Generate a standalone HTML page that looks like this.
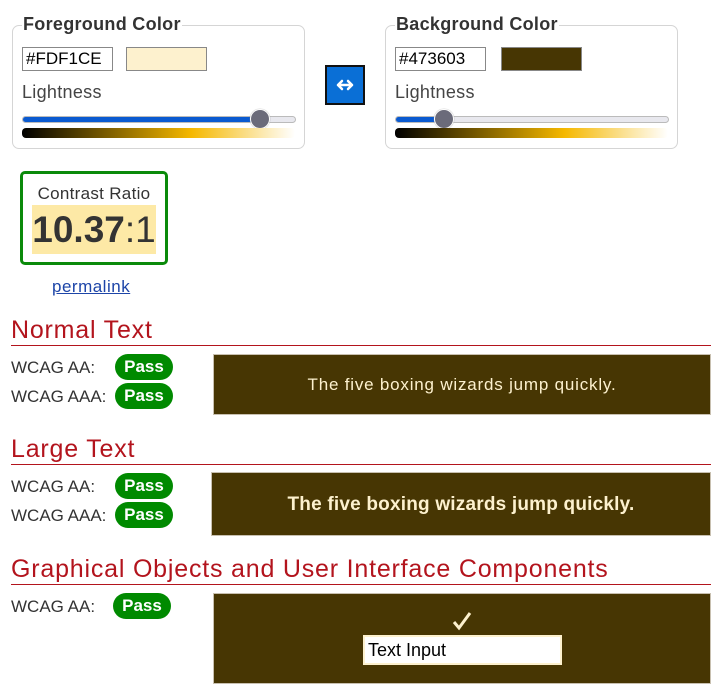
<!DOCTYPE html>
<html><head><style>
body{margin:0;width:725px;height:695px;background:#fff;font-family:"Liberation Sans",sans-serif;color:#333;position:relative;overflow:hidden}
.a{position:absolute}
.fs{position:absolute;border:1px solid #d5d5d5;border-radius:7px;width:291px;height:122px;top:25px}
.lg{position:absolute;top:-12px;left:9px;background:#fff;padding:0 1px;font-weight:bold;font-size:18px;color:#333;letter-spacing:0.3px}
.inp{position:absolute;top:21px;left:9px;border:1px solid #888;font-size:17px;line-height:21px;padding-left:3px;color:#000;box-sizing:border-box;width:91px;height:24px}
.sw{position:absolute;top:21px;left:113px;width:81px;height:24px;border:1px solid #888;box-sizing:border-box}
.lt{position:absolute;top:56px;left:9px;font-size:18px;color:#444;letter-spacing:0.3px}
.tr{position:absolute;top:90px;left:9px;width:272px;height:5px;border:1px solid #bbb;border-radius:4px;background:#e8e8ee}
.fill{position:absolute;left:0;top:0;height:5px;background:#0a5ad0;border-radius:4px}
.th{position:absolute;top:83px;width:18px;height:18px;border-radius:50%;background:#6b6b7a;border:1px solid #fff;box-shadow:0 0 1px #888}
.gr{position:absolute;top:102px;left:9px;width:273px;height:10px;border-radius:4px;background:linear-gradient(90deg,#000,#f5b800 62%,#fff)}
h2{position:absolute;margin:0;left:11px;width:700px;font-weight:normal;font-size:25px;color:#b3141d;border-bottom:1px solid #b3141d;line-height:30px;height:30px;letter-spacing:0.8px}
.lb{position:absolute;left:11px;font-size:17px;color:#333}
.p{position:absolute;width:58px;height:26px;border-radius:13px;background:#008a00;color:#fff;font-weight:bold;font-size:17px;text-align:center;line-height:26px}
.bx{position:absolute;background:#473603;border:1px solid #c8c0b0;box-sizing:border-box;color:#FDF1CE;text-align:center}
</style></head><body>
<div class="fs" style="left:12px"><div class="lg">Foreground Color</div>
<div class="inp">#FDF1CE</div><div class="sw" style="background:#FDF1CE"></div>
<div class="lt">Lightness</div><div class="tr"><div class="fill" style="width:240px"></div></div><div class="th" style="left:237px"></div><div class="gr"></div></div>
<div class="a" style="left:325px;top:65px;width:36px;height:36px;background:#0a6fd6;border:2px solid #111">
<svg width="36" height="36" viewBox="0 0 36 36"><path d="M11 18H25M11 18l4-4M11 18l4 4M25 18l-4-4M25 18l-4 4" stroke="#fff" stroke-width="2.5" fill="none" stroke-linecap="round"/></svg></div>
<div class="fs" style="left:385px"><div class="lg">Background Color</div>
<div class="inp">#473603</div><div class="sw" style="background:#473603;left:115px"></div>
<div class="lt">Lightness</div><div class="tr"><div class="fill" style="width:45px"></div></div><div class="th" style="left:48px"></div><div class="gr"></div></div>
<div class="a" style="left:20px;top:171px;width:142px;height:88px;border:3px solid #0a8a0a;border-radius:5px">
<div class="a" style="left:0;width:142px;top:10px;text-align:center;font-size:17px;color:#333;letter-spacing:0.3px">Contrast Ratio</div>
<div class="a" style="left:9px;top:31px;width:124px;height:49px;background:#fde9a6;font-size:37px;line-height:49px;text-align:center;color:#333"><b>10.37</b>:1</div></div>
<div class="a" style="left:52px;top:277px;font-size:17px;color:#1d45a8;text-decoration:underline;letter-spacing:0.5px">permalink</div>
<h2 style="top:315px">Normal Text</h2>
<div class="lb" style="top:358px">WCAG AA:</div><div class="p" style="left:115px;top:354px">Pass</div>
<div class="lb" style="top:387px">WCAG AAA:</div><div class="p" style="left:115px;top:383px">Pass</div>
<div class="bx" style="left:213px;top:354px;width:498px;height:61px;font-size:17px;line-height:59px;letter-spacing:0.8px">The five boxing wizards jump quickly.</div>
<h2 style="top:434px">Large Text</h2>
<div class="lb" style="top:477px">WCAG AA:</div><div class="p" style="left:115px;top:473px">Pass</div>
<div class="lb" style="top:506px">WCAG AAA:</div><div class="p" style="left:115px;top:502px">Pass</div>
<div class="bx" style="left:211px;top:472px;width:500px;height:64px;font-size:19px;font-weight:bold;line-height:64px;letter-spacing:0.2px">The five boxing wizards jump quickly.</div>
<h2 style="top:554px">Graphical Objects and User Interface Components</h2>
<div class="lb" style="top:597px">WCAG AA:</div><div class="p" style="left:113px;top:593px">Pass</div>
<div class="bx" style="left:213px;top:593px;width:498px;height:91px">
<svg class="a" style="left:238px;top:17px" width="20" height="20" viewBox="0 0 20 20"><path d="M2 11l5 6L18 2" stroke="#FDF1CE" stroke-width="3" fill="none"/></svg>
<div class="a" style="left:149px;top:41px;width:199px;height:30px;background:#fff;border:2px solid #FDF1CE;box-sizing:border-box;color:#000;font-size:18px;text-align:left;padding-left:3px;line-height:26px">Text Input</div></div>
</body></html>
